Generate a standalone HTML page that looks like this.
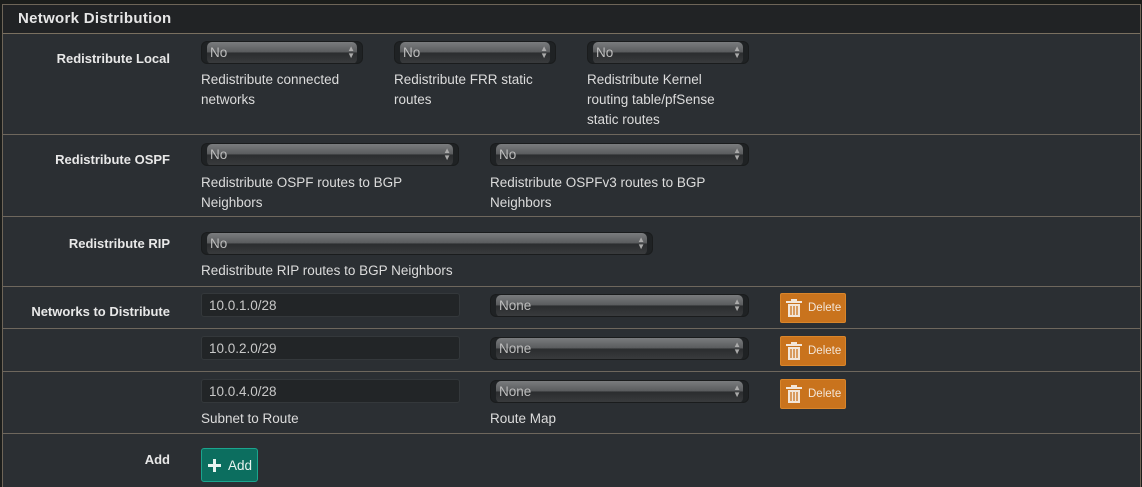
<!DOCTYPE html><html><head><style>
*{box-sizing:border-box;margin:0;padding:0}
html,body{width:1142px;height:487px;overflow:hidden}
body{background:#1b1d1b;font-family:"Liberation Sans",sans-serif;position:relative}
.panel{position:absolute;left:2px;top:4px;width:1139px;height:490px;border:1px solid #6e6558;background:#2b2f33}
.hdr{position:absolute;left:0;top:0;right:0;height:29px;background:#212325;border-bottom:1px solid #7a7060;color:#e6e6e6;font-weight:bold;font-size:15px;padding:5px 0 0 15px;letter-spacing:.3px}
.hr{position:absolute;left:0;right:0;height:1px;background:#6e675d}
.a{position:absolute}
.lbl{position:absolute;color:#e8e8e8;font-weight:bold;font-size:13px;text-align:right;width:170px;left:0}
.txt{position:absolute;color:#dcdcdc;font-size:13.5px;line-height:20px}
.sel{position:absolute;height:23px;border-radius:6px;background:#1f2224;border:1px solid #1a1c1d;overflow:hidden}
.sel::before{content:"";position:absolute;left:5px;right:5px;top:0;height:22px;border-radius:5px;background:linear-gradient(#7a7c7e,#5a5c5e 45%,#2b2d2f 50%,#3a3c3e 100%)}
.sel span{position:absolute;left:8px;top:3px;color:#bdbdbd;font-size:13.5px}
.sel i{position:absolute;right:7px;top:3px;color:#aaa;font-size:8px;line-height:7px;font-style:normal}
.inp{position:absolute;height:24px;border-radius:3px;background:#222527;border:1px solid #34383b;color:#c8c8c8;font-size:13.5px;padding:4px 0 0 7px}
.del{position:absolute;width:66px;height:30px;background:#c9731d;border:1px solid #d9852a;border-radius:2px;color:#f3e6d8;font-size:11.5px;padding:8px 0 0 27px}
.add{position:absolute;left:201px;top:448px;width:57px;height:34px;background:#0c6e5f;border:1px solid #1aa58e;border-radius:3px;color:#e8f4f0;font-size:13.5px;padding:9px 0 0 26px}
</style></head><body>
<div class="panel">
<div class="hdr">Network Distribution</div>
<div class="hr" style="top:129px"></div><div class="hr" style="top:211px"></div><div class="hr" style="top:281px"></div><div class="hr" style="top:323px"></div><div class="hr" style="top:366px"></div><div class="hr" style="top:428px"></div>
</div>
<div class="lbl" style="top:51px">Redistribute Local</div>
<div class="lbl" style="top:152px">Redistribute OSPF</div>
<div class="lbl" style="top:236px">Redistribute RIP</div>
<div class="lbl" style="top:304px">Networks to Distribute</div>
<div class="lbl" style="top:452px">Add</div>

<div class="sel" style="left:201px;top:41px;width:162px"><span>No</span><i>▲<br>▼</i></div>
<div class="sel" style="left:394px;top:41px;width:162px"><span>No</span><i>▲<br>▼</i></div>
<div class="sel" style="left:587px;top:41px;width:162px"><span>No</span><i>▲<br>▼</i></div>
<div class="txt" style="left:201px;top:70px">Redistribute connected<br>networks</div>
<div class="txt" style="left:394px;top:70px">Redistribute FRR static<br>routes</div>
<div class="txt" style="left:587px;top:70px">Redistribute Kernel<br>routing table/pfSense<br>static routes</div>

<div class="sel" style="left:201px;top:143px;width:258px"><span>No</span><i>▲<br>▼</i></div>
<div class="sel" style="left:490px;top:143px;width:259px"><span>No</span><i>▲<br>▼</i></div>
<div class="txt" style="left:201px;top:173px">Redistribute OSPF routes to BGP<br>Neighbors</div>
<div class="txt" style="left:490px;top:173px">Redistribute OSPFv3 routes to BGP<br>Neighbors</div>

<div class="sel" style="left:201px;top:232px;width:452px"><span>No</span><i>▲<br>▼</i></div>
<div class="txt" style="left:201px;top:261px">Redistribute RIP routes to BGP Neighbors</div>

<div class="inp" style="left:201px;top:293px;width:259px">10.0.1.0/28</div>
<div class="sel" style="left:490px;top:294px;width:259px"><span>None</span><i>▲<br>▼</i></div>
<div class="del" style="left:780px;top:293px"><svg class="a" style="left:4px;top:5px" width="18" height="19" viewBox="0 0 18 19"><rect x="1" y="2" width="16" height="2" fill="#f3e6d8"/><rect x="6" y="0" width="6" height="3" fill="#f3e6d8"/><path d="M3 5h12v13H3z" fill="#f3e6d8"/><path d="M6 7v9M9 7v9M12 7v9" stroke="#c9731d" stroke-width="1.3"/></svg>Delete</div>

<div class="inp" style="left:201px;top:336px;width:259px">10.0.2.0/29</div>
<div class="sel" style="left:490px;top:337px;width:259px"><span>None</span><i>▲<br>▼</i></div>
<div class="del" style="left:780px;top:336px"><svg class="a" style="left:4px;top:5px" width="18" height="19" viewBox="0 0 18 19"><rect x="1" y="2" width="16" height="2" fill="#f3e6d8"/><rect x="6" y="0" width="6" height="3" fill="#f3e6d8"/><path d="M3 5h12v13H3z" fill="#f3e6d8"/><path d="M6 7v9M9 7v9M12 7v9" stroke="#c9731d" stroke-width="1.3"/></svg>Delete</div>

<div class="inp" style="left:201px;top:379px;width:259px">10.0.4.0/28</div>
<div class="sel" style="left:490px;top:380px;width:259px"><span>None</span><i>▲<br>▼</i></div>
<div class="del" style="left:780px;top:379px"><svg class="a" style="left:4px;top:5px" width="18" height="19" viewBox="0 0 18 19"><rect x="1" y="2" width="16" height="2" fill="#f3e6d8"/><rect x="6" y="0" width="6" height="3" fill="#f3e6d8"/><path d="M3 5h12v13H3z" fill="#f3e6d8"/><path d="M6 7v9M9 7v9M12 7v9" stroke="#c9731d" stroke-width="1.3"/></svg>Delete</div>
<div class="txt" style="left:201px;top:409px">Subnet to Route</div>
<div class="txt" style="left:490px;top:409px">Route Map</div>

<div class="add"><svg class="a" style="left:5px;top:9px" width="15" height="15" viewBox="0 0 15 15"><path d="M7.5 1v13M1 7.5h13" stroke="#e8f4f0" stroke-width="3"/></svg>Add</div>
</body></html>
